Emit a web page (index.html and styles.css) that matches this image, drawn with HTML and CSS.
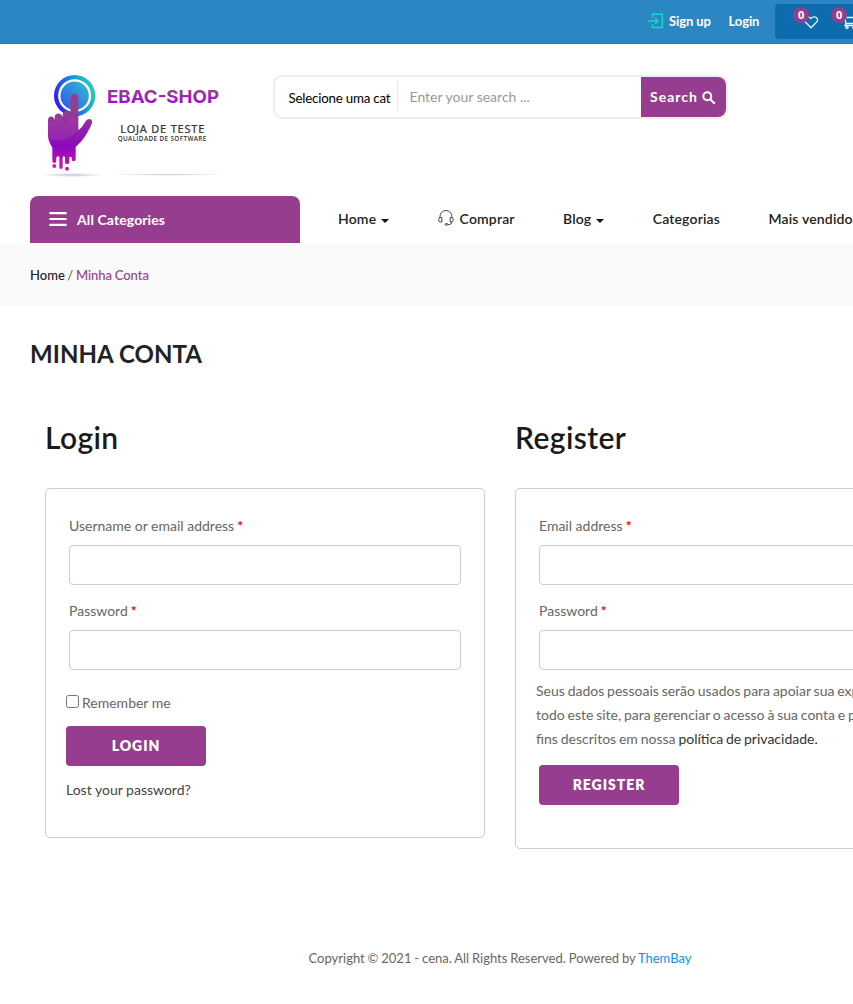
FILE: index.html
```html
<!DOCTYPE html>
<html lang="pt-BR">
<head>
<meta charset="utf-8">
<title>Minha Conta</title>
<link rel="stylesheet" href="styles.css">
</head>
<body>
<div class="page">
  <header>
    <div class="topbar">
      <a class="signup"><svg width="16" height="16" viewBox="0 0 16 16" fill="none" stroke="#10dcc4" stroke-width="1.4"><path d="M4.5 4.5V1.2h9.8v13.3H4.5v-3.300M0 8h9.500M7 5l3 3-3 3"/></svg>Sign up</a>
      <a class="login-link">Login</a>
      <div class="tools">
        <span class="tool heart"><svg width="16" height="15" viewBox="0 0 16 15" fill="none" stroke="#e5f2fa" stroke-width="1.300"><path d="M8 12.800 2.300 7C-.5 3.500 4.500-.2 8 3.500c3.500-3.700 8.500 0 5.700 3.500z"/></svg><b class="badge">0</b></span>
        <span class="tool cart"><svg width="18" height="16" viewBox="0 0 18 16" fill="none" stroke="#e5f2fa" stroke-width="1.400"><path d="M0 1.500h3l2 8h9l2-6H4M5 9.500l-1 2h11"/><circle cx="6" cy="13.500" r="1.100"/><circle cx="13" cy="13.500" r="1.100"/></svg><b class="badge">0</b></span>
      </div>
    </div>
    <div class="brand-row">
      <svg class="logo" width="210" height="125" viewBox="0 0 630 375">
        <defs>
          <linearGradient id="ring" x1="0" y1=".65" x2="1" y2=".25"><stop offset="0" stop-color="#3214fa"/><stop offset=".55" stop-color="#168de0"/><stop offset="1" stop-color="#2cd6ad"/></linearGradient>
          <linearGradient id="disc" x1="0" y1="1" x2="1" y2="0"><stop offset="0" stop-color="#2a4fee"/><stop offset="1" stop-color="#35c5d0"/></linearGradient>
          <linearGradient id="hand" gradientUnits="userSpaceOnUse" x1="0" y1="100" x2="0" y2="330"><stop offset=".25" stop-color="#963d92"/><stop offset=".7" stop-color="#8b08bd"/><stop offset="1" stop-color="#d914aa"/></linearGradient>
          <linearGradient id="word" x1="0" y1="0" x2="0" y2="1"><stop offset=".25" stop-color="#963d92"/><stop offset=".8" stop-color="#a00bdc"/></linearGradient>
          <radialGradient id="shade"><stop offset="0" stop-color="#c4c4e2"/><stop offset="1" stop-color="#c4c4e2" stop-opacity="0"/></radialGradient>
        </defs>
        <circle cx="134" cy="107" r="62" fill="url(#ring)"/>
        <circle cx="134" cy="107" r="46" fill="url(#disc)" stroke="#fff" stroke-width="7"/>
        <path fill="url(#hand)" d="M121 114a12 12 0 0 1 24 0v97q12-9 22-27c6-10 22-9 19 4-6 19-24 50-41 65l-8 8v37a6 6 0 0 1-12 0v-7h-7v17a7 7 0 0 1-13 0v-16q-4-6-7 0v30a5 5 0 0 1-10 0v-31q-5-5-9 2v10a6 6 0 0 1-12 0v-40Q54 244 54 226v-45c0-15 17-15 20 0v-9c0-15 20-15 24 0v-8c1-15 23-15 23 0z"/>
        <path fill="#b152ae" opacity=".25" d="M54 184c8-10 18 15 20 0s18-15 24 0 23 0 23-18l24 23c2 48-54 54-91 52z"/>
        <g fill="#dc13ad"><circle cx="73" cy="318" r="6"/><circle cx="111" cy="326" r="6"/></g>
        <ellipse cx="126" cy="345" rx="95" ry="6" fill="url(#shade)"/>
        <ellipse cx="415" cy="344" rx="180" ry="3" fill="url(#shade)"/>
        <text class="logo-name" x="231" y="129" textLength="336" lengthAdjust="spacingAndGlyphs" fill="url(#word)">EBAC-SHOP</text>
        <text class="logo-sub" x="271" y="219" textLength="252">LOJA DE TESTE</text>
        <text class="logo-tag" x="263" y="242" textLength="266">QUALIDADE DE SOFTWARE</text>
      </svg>
      <div class="search">
        <span class="select">Selecione uma cat</span>
        <span class="field">Enter your search ...</span>
        <button class="search-btn">Search <svg width="14" height="14" viewBox="0 0 14 14" fill="none" stroke="#fff" stroke-width="2"><circle cx="5.300" cy="5.300" r="4"/><path d="m8.300 8.300 4.500 4.500"/></svg></button>
      </div>
    </div>
    <div class="nav-row">
      <div class="all-cats"><svg width="18" height="14" viewBox="0 0 18 14" stroke="#fff" stroke-width="2.200" stroke-linecap="round"><path d="M1.200 1.200h15.600M1.200 7h15.600M1.200 12.800h15.600"/></svg>All Categories</div>
      <nav class="menu">
        <a>Home<i class="caret"></i></a>
        <a><svg class="headset" width="16" height="16" viewBox="0 0 16 16" fill="none" stroke="#333" stroke-width=".9"><path d="M2 8V6.500a6 6 0 0 1 12 0V8M3.800 7.500H2C.2 7.500.2 12 2 12h1.800zM12.200 7.500H14c1.800 0 1.800 4.500 0 4.500h-1.800zM13.500 12v.5q0 2-2 2H10"/><rect x="7" y="13.700" width="3" height="1.400" rx=".7"/></svg>Comprar</a>
        <a>Blog<i class="caret"></i></a>
        <a>Categorias</a>
        <a>Mais vendidos</a>
      </nav>
    </div>
  </header>
  <div class="breadcrumb">Home <span class="slash">/</span> <span class="current">Minha Conta</span></div>
  <main>
    <h1>MINHA CONTA</h1>
    <div class="columns">
      <section>
        <h2>Login</h2>
        <form class="card login-card">
          <label>Username or email address <em>*</em></label>
          <input type="text">
          <label>Password <em>*</em></label>
          <input type="password">
          <div class="remember"><span class="check"></span>Remember me</div>
          <button type="button" class="btn login-btn">LOGIN</button>
          <a class="lost">Lost your password?</a>
        </form>
      </section>
      <section>
        <h2>Register</h2>
        <form class="card register-card">
          <label>Email address <em>*</em></label>
          <input type="text">
          <label>Password <em>*</em></label>
          <input type="password">
          <p class="privacy">Seus dados pessoais serão usados para apoiar sua experiência em<br>todo este site, para gerenciar o acesso à sua conta e para outros<br>fins descritos em nossa <a>política de privacidade.</a></p>
          <button type="button" class="btn">REGISTER</button>
        </form>
      </section>
    </div>
  </main>
  <footer>Copyright © 2021 - cena. All Rights Reserved. Powered by <a>ThemBay</a></footer>
</div>
</body>
</html>
```
FILE: styles.css
```css
* { box-sizing: border-box; }
html { overflow: hidden; }
body { margin: 0; background: #fff; color: #666; font: 14px/24px Lato, sans-serif; overflow: hidden; }
.page { width: 1000px; height: 1004px; }
.topbar { height: 44px; background: #2b87c4; display: flex; align-items: flex-start; padding-left: 648px; color: #fff; font-size: 13px; font-weight: 700; letter-spacing: -.1px; line-height: 42px; border-bottom: 1px solid #247db8; }
.signup { display: flex; align-items: center; gap: 5px; width: 80.500px; white-space: nowrap; }
.login-link { width: 46.500px; }
.tools { margin-top: 4px; width: 195px; height: 35px; border-radius: 4px; background: #0d6cae; display: flex; padding: 11px 0 0 28px; gap: 22px; }
.tool { position: relative; height: 16px; line-height: 0; }
.cart svg { margin-top: -1px; }
.badge { position: absolute; left: -10px; top: -8px; width: 16px; height: 16px; border-radius: 50%; background: #963d8f; font: 700 11px/16px "Open Sans", sans-serif; text-align: center; }
.brand-row { height: 152px; padding: 16px 30px 0; display: flex; }
.logo { display: block; flex: none; }
.logo-name { font: 700 54px Inter, sans-serif; }
.logo-sub { font: 400 33px "Noto Sans", sans-serif; fill: #333; stroke: #333; stroke-width: .7px; }
.logo-tag { font: 600 19px "Open Sans", sans-serif; fill: #333; }
.search { margin: 15px 0 0 33px; width: 455px; height: 44px; border: 2px solid #eee; border-radius: 9px; display: flex; align-items: center; flex: none; }
.select { width: 123px; height: 30px; line-height: 32px; padding-left: 13.500px; border-right: 1px solid #e8e8e8; color: #000; font-size: 13.333px; letter-spacing: -.22px; white-space: nowrap; }
.field { flex: 1; padding-left: 11.500px; color: #999; line-height: 40px; }
.search-btn { width: 85px; height: 40px; border: 0; border-radius: 0 8px 8px 0; background: #963d8f; color: #fff; font: 700 14px/38px Lato, sans-serif; letter-spacing: 1px; display: flex; align-items: center; gap: 4px; padding: 0 0 1px 9px; }
.search-btn svg { margin-top: 3px; }
.nav-row { height: 48px; padding-left: 30px; display: flex; }
.all-cats { width: 270px; height: 47px; border-radius: 8px 8px 0 0; background: #963d8f; color: #fff; font-weight: 700; display: flex; align-items: center; gap: 10px; padding-left: 19px; letter-spacing: .1px; }
.all-cats svg { margin-top: -2px; }
.menu { display: flex; gap: 48.300px; padding-left: 38px; line-height: 46px; height: 46px; font-weight: 600; color: #222; letter-spacing: .17px; white-space: nowrap; }
.menu a { display: flex; align-items: center; }
.caret { border: 4px solid transparent; border-top-color: #111; border-bottom: 0; margin: 3px 0 0 5px; }
.headset { margin: -2px 6px 0 0; }
.breadcrumb { height: 62px; background: #fafafa; padding-left: 30px; line-height: 62px; font-size: 13px; color: #222; font-weight: 500; word-spacing: -.7px; }
.slash { color: #666; }
.current { color: #963d8f; }
main { padding: 32px 30px 0; }
h1 { margin: 0; font-size: 24px; font-weight: 700; line-height: 31px; letter-spacing: .08px; color: #222; }
.columns { display: grid; grid-template-columns: 440px 440px; gap: 30px; padding: 45px 15px 0; align-items: start; }
h2 { margin: 0; font-size: 30px; font-weight: 600; line-height: 46px; letter-spacing: .4px; color: #1a1a1a; }
.card { display: flex; flex-direction: column; align-items: flex-start; margin-top: 28px; padding: 25px 23px; border: 1px solid #ccc; border-radius: 5px; }
.login-card { height: 350px; }
.register-card { height: 361px; }
label { line-height: 24px; margin-bottom: 7px; }
label em { color: #f00; font-style: normal; font-weight: 700; margin-left: -.5px; }
input { width: 392px; height: 40px; border: 1px solid #ccc; border-radius: 4px; margin: 0 0 14px; background: #fff; }
.remember { display: flex; align-items: center; gap: 3px; margin: 7px 0 11px -3px; }
.check { width: 13px; height: 13px; border: 1px solid #767676; border-radius: 2.500px; margin-top: -3px; }
.btn { width: 140px; height: 40px; flex: none; border: 0; border-radius: 4px; background: #963d8f; color: #fff; font: 800 14px/40px Lato, sans-serif; letter-spacing: .95px; padding: 0; }
.login-btn { margin-left: -3px; }
.lost { color: #444; margin: 12px 0 0 -3px; }
.privacy { margin: -5px 0 14px -3px; white-space: nowrap; word-spacing: -.75px; }
.privacy a { color: #333; }
footer { margin-top: 97px; text-align: center; font-size: 13px; color: #666; word-spacing: -.45px; }
footer a { color: #1191ee; }
```
